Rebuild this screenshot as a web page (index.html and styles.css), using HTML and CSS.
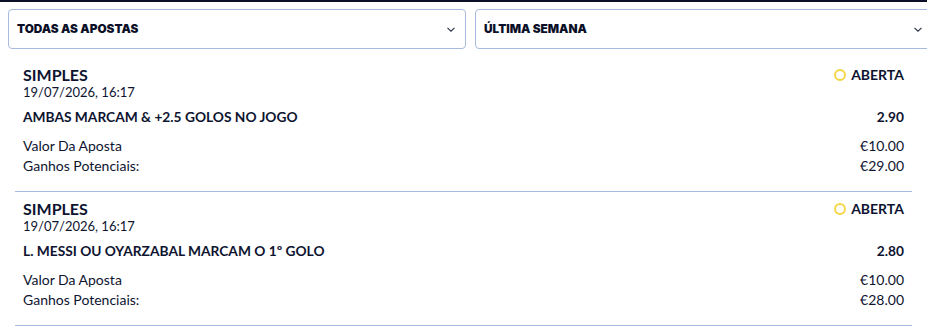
FILE: index.html
```html
<!DOCTYPE html>
<html lang="pt">
<head>
<meta charset="utf-8">
<link rel="stylesheet" href="styles.css">
</head>
<body>
<div class="topbar"></div>
<div class="filters">
  <div class="select"><span class="select-label">TODAS AS APOSTAS</span><svg class="chev" width="8" height="5" viewBox="0 0 8 5"><path d="M0.5 0.8l3.5 3.4 3.5-3.4" fill="none" stroke="#2a2f45" stroke-width="1.1"/></svg></div>
  <div class="select"><span class="select-label">ÚLTIMA SEMANA</span><svg class="chev" width="8" height="5" viewBox="0 0 8 5"><path d="M0.5 0.8l3.5 3.4 3.5-3.4" fill="none" stroke="#2a2f45" stroke-width="1.1"/></svg></div>
</div>
<div class="bets">
  <div class="bet">
    <div class="bet-head">
      <div>
        <div class="bet-type">SIMPLES</div>
        <div class="bet-date">19/07/2026, 16:17</div>
      </div>
      <div class="status"><span class="status-dot"></span>ABERTA</div>
    </div>
    <div class="row selection"><span>AMBAS MARCAM &amp; +2.5 GOLOS NO JOGO</span><span>2.90</span></div>
    <div class="row amount first"><span>Valor Da Aposta</span><span>€10.00</span></div>
    <div class="row amount"><span>Ganhos Potenciais:</span><span>€29.00</span></div>
  </div>
  <div class="bet">
    <div class="bet-head">
      <div>
        <div class="bet-type">SIMPLES</div>
        <div class="bet-date">19/07/2026, 16:17</div>
      </div>
      <div class="status"><span class="status-dot"></span>ABERTA</div>
    </div>
    <div class="row selection"><span>L. MESSI OU OYARZABAL MARCAM O 1º GOLO</span><span>2.80</span></div>
    <div class="row amount first"><span>Valor Da Aposta</span><span>€10.00</span></div>
    <div class="row amount"><span>Ganhos Potenciais:</span><span>€28.00</span></div>
  </div>
</div>
</body>
</html>
```
FILE: styles.css
```css
html, body {
  margin: 0;
  padding: 0;
  background: #fff;
  overflow: hidden;
}
body {
  font-family: Lato, "Liberation Sans", sans-serif;
  color: #0e1430;
  width: 927px;
}
.topbar {
  height: 2px;
  background: #0b1028;
}
.filters {
  display: flex;
  gap: 9px;
  padding: 7px 0 0 8px;
  width: 960px;
}
.select {
  flex: 0 0 458px;
  box-sizing: border-box;
  height: 40px;
  border: 1px solid #a9badf;
  border-radius: 4px;
  display: flex;
  align-items: center;
  justify-content: space-between;
  padding: 0 10px 0 8px;
}
.select-label {
  font-family: Inter, "Open Sans", sans-serif;
  font-weight: 900;
  font-size: 11.8px;
  color: #0b1028;
}
.chev {
  display: block;
}
.bets {
  padding: 0 15px;
  margin-top: 17px;
}
.bet {
  padding: 0 8px 15px;
  border-bottom: 1px solid #a9badf;
  margin-bottom: 8px;
}
.bet-head {
  display: flex;
  justify-content: space-between;
  align-items: flex-start;
}
.bet-type {
  font-weight: 700;
  font-size: 16px;
  line-height: 18px;
}
.bet-date {
  font-size: 13px;
  line-height: 16px;
}
.status {
  display: flex;
  align-items: center;
  gap: 5px;
  font-weight: 700;
  font-size: 14px;
  line-height: 18px;
}
.status-dot {
  flex: 0 0 auto;
  box-sizing: border-box;
  width: 12px;
  height: 12px;
  border: 2px solid #f6d645;
  border-radius: 50%;
}
.row {
  display: flex;
  justify-content: space-between;
  font-size: 14px;
  line-height: 20px;
}
.selection {
  font-weight: 700;
  font-size: 13.75px;
  margin-top: 7px;
}
.amount.first {
  margin-top: 9px;
}
```
